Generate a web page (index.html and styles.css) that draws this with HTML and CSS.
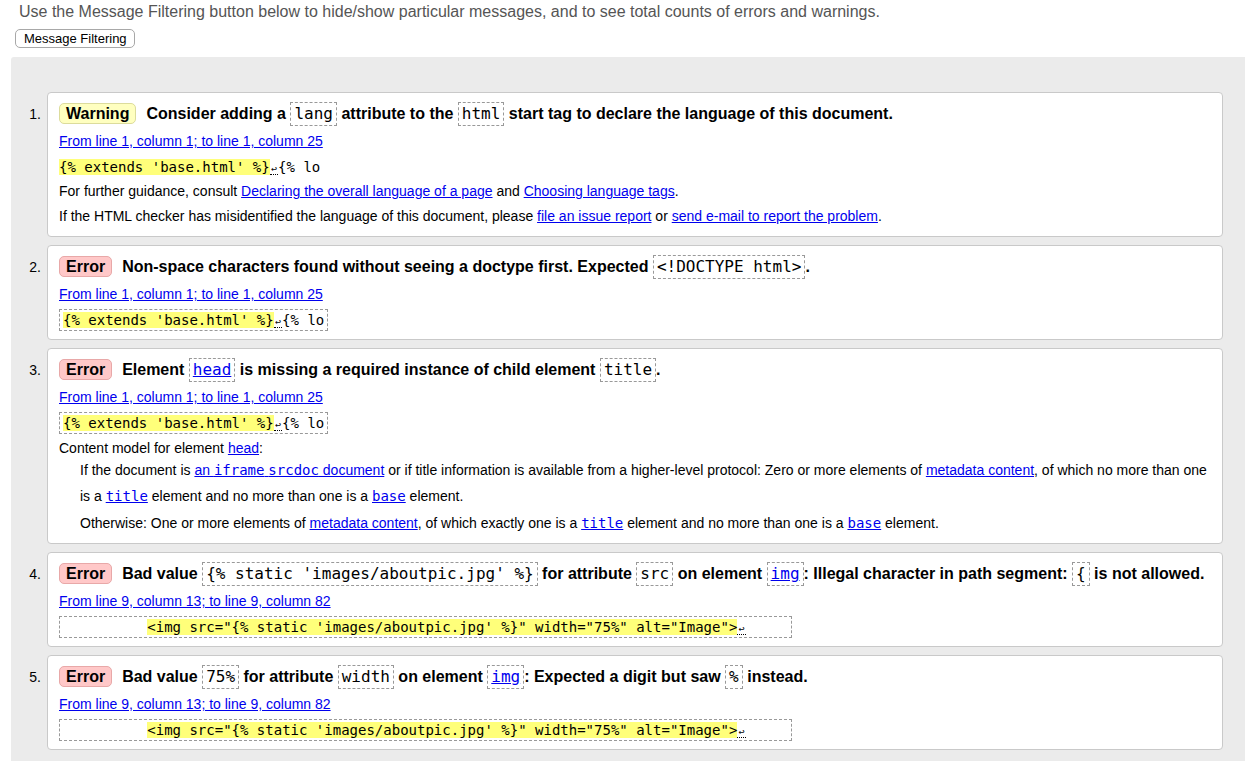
FILE: index.html
```html
<!DOCTYPE html>
<html lang="en">
<head>
<meta charset="utf-8">
<title>Nu Html Checker results</title>
<link rel="stylesheet" href="styles.css">
</head>
<body>
<p class="intro">Use the Message Filtering button below to hide/show particular messages, and to see total counts of errors and warnings.</p>
<button class="filter-btn" type="button">Message Filtering</button>
<div class="panel">
  <ol class="messages">
    <li class="item">
      <span class="num">1.</span>
      <div class="msg">
        <p class="msg-title"><span class="badge badge-warning">Warning</span>Consider adding a <code class="tcode">lang</code> attribute to the <code class="tcode">html</code> start tag to declare the language of this document.</p>
        <p class="loc"><a href="#">From line 1, column 1; to line 1, column 25</a></p>
        <code class="extract extract-plain"><mark class="hl">{% extends 'base.html' %}</mark><span class="lf">↩</span>{% lo</code>
        <p class="note">For further guidance, consult <a href="#">Declaring the overall language of a page</a> and <a href="#">Choosing language tags</a>.</p>
        <p class="note">If the HTML checker has misidentified the language of this document, please <a href="#">file an issue report</a> or <a href="#">send e-mail to report the problem</a>.</p>
      </div>
    </li>
    <li class="item">
      <span class="num">2.</span>
      <div class="msg">
        <p class="msg-title"><span class="badge badge-error">Error</span>Non-space characters found without seeing a doctype first. Expected <code class="tcode">&lt;!DOCTYPE html&gt;</code>.</p>
        <p class="loc"><a href="#">From line 1, column 1; to line 1, column 25</a></p>
        <code class="extract"><mark class="hl">{% extends 'base.html' %}</mark><span class="lf">↩</span>{% lo</code>
      </div>
    </li>
    <li class="item">
      <span class="num">3.</span>
      <div class="msg">
        <p class="msg-title"><span class="badge badge-error">Error</span>Element <code class="tcode"><a href="#">head</a></code> is missing a required instance of child element <code class="tcode">title</code>.</p>
        <p class="loc"><a href="#">From line 1, column 1; to line 1, column 25</a></p>
        <code class="extract"><mark class="hl">{% extends 'base.html' %}</mark><span class="lf">↩</span>{% lo</code>
        <p class="cm">Content model for element <a href="#">head</a>:</p>
        <div class="cm-body">
          <p class="cm-case">If the document is <a href="#">an <code class="icode">iframe</code> <code class="icode">srcdoc</code> document</a> or if title information is available from a higher-level protocol: Zero or more elements of <a href="#">metadata content</a>, of which no more than one is a <a href="#"><code class="icode">title</code></a> element and no more than one is a <a href="#"><code class="icode">base</code></a> element.</p>
          <p class="cm-case cm-case-last">Otherwise: One or more elements of <a href="#">metadata content</a>, of which exactly one is a <a href="#"><code class="icode">title</code></a> element and no more than one is a <a href="#"><code class="icode">base</code></a> element.</p>
        </div>
      </div>
    </li>
    <li class="item">
      <span class="num">4.</span>
      <div class="msg">
        <p class="msg-title"><span class="badge badge-error">Error</span>Bad value <code class="tcode">{% static 'images/aboutpic.jpg' %}</code> for attribute <code class="tcode">src</code> on element <code class="tcode"><a href="#">img</a></code>: Illegal character in path segment: <code class="tcode">{</code> is not allowed.</p>
        <p class="loc"><a href="#">From line 9, column 13; to line 9, column 82</a></p>
        <code class="extract">          <mark class="hl">&lt;img src="{% static 'images/aboutpic.jpg' %}" width="75%" alt="Image"&gt;</mark><span class="lf">↩</span>     </code>
      </div>
    </li>
    <li class="item">
      <span class="num">5.</span>
      <div class="msg">
        <p class="msg-title"><span class="badge badge-error">Error</span>Bad value <code class="tcode">75%</code> for attribute <code class="tcode">width</code> on element <code class="tcode"><a href="#">img</a></code>: Expected a digit but saw <code class="tcode">%</code> instead.</p>
        <p class="loc"><a href="#">From line 9, column 13; to line 9, column 82</a></p>
        <code class="extract">          <mark class="hl">&lt;img src="{% static 'images/aboutpic.jpg' %}" width="75%" alt="Image"&gt;</mark><span class="lf">↩</span>     </code>
      </div>
    </li>
  </ol>
</div>
</body>
</html>
```
FILE: styles.css
```css
html, body {
  margin: 0;
  padding: 0;
  background: #ffffff;
}

body {
  font-family: "Liberation Sans", Arial, Helvetica, sans-serif;
  color: #000;
}

.intro {
  margin: 0;
  padding: 3px 0 0 19px;
  font-size: 16px;
  line-height: 18px;
  color: #555555;
}

.filter-btn {
  display: block;
  margin: 8px 0 0 15px;
  height: 19px;
  padding: 0 7px 0 8px;
  font-family: "Liberation Sans", Arial, sans-serif;
  font-size: 13px;
  line-height: 17px;
  color: #000;
  background: #ffffff;
  border: 1px solid #a8a8a8;
  border-radius: 5px;
}

.panel {
  margin: 9px 0 0 11px;
  padding: 35px 22px 40px 0;
  background: #ebebeb;
  border-top-left-radius: 3px;
}

.messages {
  list-style: none;
  margin: 0;
  padding: 0;
  display: flex;
  flex-direction: column;
  gap: 8px;
}

.item {
  display: grid;
  grid-template-columns: 30px 1fr;
  column-gap: 6px;
}

.num {
  text-align: right;
  font-size: 14px;
  line-height: 26px;
  padding-top: 9px;
}

.msg {
  background: #ffffff;
  border: 1px solid #c9c9c9;
  border-radius: 4px;
  padding: 8px 12px 7px 11px;
  font-size: 14px;
}

.msg p {
  margin: 0;
}

.msg a {
  color: #0000ee;
  text-decoration: underline;
}

.msg-title {
  font-size: 16px;
  font-weight: bold;
  line-height: 26px;
}

.badge {
  display: inline-block;
  line-height: 19px;
  padding: 0 6px;
  margin-right: 10px;
  border-radius: 5px;
  font-weight: bold;
}

.badge-warning {
  background: #ffffc0;
  border: 1px solid #dcdc9c;
}

.badge-error {
  background: #ffc8c8;
  border: 1px solid #e8a8a8;
}

.tcode {
  display: inline-block;
  font-family: "DejaVu Sans Mono", "Liberation Mono", monospace;
  font-size: 16px;
  font-weight: normal;
  line-height: 22px;
  padding: 0 3px;
  border: 1px dashed #999999;
  vertical-align: baseline;
}

.loc {
  margin-top: 4px !important;
  line-height: 20px;
}

.extract {
  display: block;
  width: fit-content;
  margin: 5px 0 1px;
  padding: 0 3px;
  font-family: "DejaVu Sans Mono", "Liberation Mono", monospace;
  font-size: 14px;
  line-height: 20px;
  white-space: pre;
  border: 1px dashed #999999;
}

.extract-plain {
  border: none;
  padding: 0;
  line-height: 22px;
}

.hl {
  background: #ffff7a;
  color: #000;
}

.lf {
  display: inline-block;
  width: 8.4px;
  font-size: 10px;
  line-height: 10px;
  text-align: center;
  border-bottom: 1px dotted #000;
}

.note {
  line-height: 25px;
}

.cm {
  margin-top: 5px !important;
  line-height: 18px;
}

.cm-body {
  padding-left: 21px;
}

.cm-case {
  line-height: 26px;
}

.cm-case-last {
  margin-top: 1px !important;
}

.icode {
  font-family: "DejaVu Sans Mono", "Liberation Mono", monospace;
  font-size: 14px;
}
```
